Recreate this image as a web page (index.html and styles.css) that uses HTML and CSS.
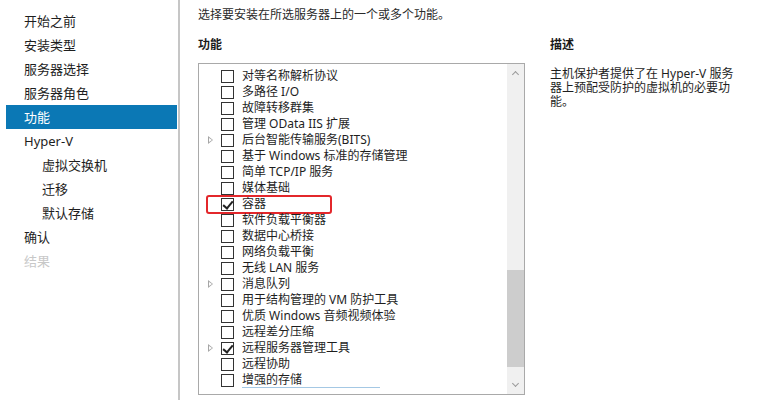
FILE: index.html
```html
<!DOCTYPE html>
<html lang="zh-CN">
<head>
    <meta charset="UTF-8">
    <title>添加角色和功能向导</title>
    <link rel="stylesheet" href="styles.css">
</head>
<body>
    <div class="wizard">
        <ul class="nav">
            <li>开始之前</li>
            <li>安装类型</li>
            <li>服务器选择</li>
            <li>服务器角色</li>
            <li class="active">功能</li>
            <li>Hyper-V</li>
            <li class="sub">虚拟交换机</li>
            <li class="sub">迁移</li>
            <li class="sub">默认存储</li>
            <li>确认</li>
            <li class="disabled">结果</li>
        </ul>
        <div class="main">
            <p class="intro">选择要安装在所选服务器上的一个或多个功能。</p>
            <div class="columns">
                <div class="features">
                    <h3>功能</h3>
                    <div class="listbox">
                        <ul class="tree">
                            <li><span class="exp"></span><span class="cb"></span>对等名称解析协议</li>
                            <li><span class="exp"></span><span class="cb"></span>多路径 I/O</li>
                            <li><span class="exp"></span><span class="cb"></span>故障转移群集</li>
                            <li><span class="exp"></span><span class="cb"></span>管理 OData IIS 扩展</li>
                            <li><span class="exp more"></span><span class="cb"></span>后台智能传输服务(BITS)</li>
                            <li><span class="exp"></span><span class="cb"></span>基于 Windows 标准的存储管理</li>
                            <li><span class="exp"></span><span class="cb"></span>简单 TCP/IP 服务</li>
                            <li><span class="exp"></span><span class="cb"></span>媒体基础</li>
                            <li class="marked"><span class="exp"></span><span class="cb checked"></span>容器</li>
                            <li><span class="exp"></span><span class="cb"></span>软件负载平衡器</li>
                            <li><span class="exp"></span><span class="cb"></span>数据中心桥接</li>
                            <li><span class="exp"></span><span class="cb"></span>网络负载平衡</li>
                            <li><span class="exp"></span><span class="cb"></span>无线 LAN 服务</li>
                            <li><span class="exp more"></span><span class="cb"></span>消息队列</li>
                            <li><span class="exp"></span><span class="cb"></span>用于结构管理的 VM 防护工具</li>
                            <li><span class="exp"></span><span class="cb"></span>优质 Windows 音频视频体验</li>
                            <li><span class="exp"></span><span class="cb"></span>远程差分压缩</li>
                            <li><span class="exp more"></span><span class="cb checked"></span>远程服务器管理工具</li>
                            <li><span class="exp"></span><span class="cb"></span>远程协助</li>
                            <li><span class="exp"></span><span class="cb"></span><span class="focus">增强的存储</span></li>
                        </ul>
                        <div class="scrollbar">
                            <span class="arrow up"></span>
                            <div class="track"><div class="thumb"></div></div>
                            <span class="arrow down"></span>
                        </div>
                    </div>
                </div>
                <div class="desc">
                    <h3>描述</h3>
                    <p>主机保护者提供了在 Hyper-V 服务器上预配受防护的虚拟机的必要功能。</p>
                </div>
            </div>
        </div>
    </div>
</body>
</html>
```

FILE: styles.css
```css
body {
    margin: 0;
    background: #fff;
    font-family: "Noto Sans", "Noto Sans CJK SC", sans-serif;
    color: #1e1e1e;
}
ul {
    list-style: none;
    margin: 0;
    padding: 0;
}
.wizard {
    display: flex;
    height: 400px;
}
.nav {
    width: 180px;
    padding-top: 9px;
    border-right: 2px solid #c6c6c6;
    font-size: 13px;
    box-sizing: border-box;
}
.nav li {
    height: 24px;
    line-height: 24px;
    margin-left: 6px;
    width: 171px;
    padding-left: 18px;
    box-sizing: border-box;
}
.nav li.sub {
    padding-left: 36px;
}
.nav li.active {
    background: #0b78b5;
    color: #fff;
}
.nav li.disabled {
    color: #c8c8c8;
}
.main {
    padding-left: 18px;
    flex: 1;
}
.intro {
    margin: 7px 0 0;
    font-size: 12px;
    line-height: 16px;
    color: #2a2a2a;
}
.columns {
    display: flex;
}
.features {
    width: 327px;
}
h3 {
    margin: 14px 0 0;
    font-size: 12px;
    line-height: 16px;
    font-weight: bold;
    color: #1a1a1a;
}
.listbox {
    margin-top: 10px;
    height: 332px;
    border: 1px solid #a9a9a9;
    box-sizing: border-box;
    display: flex;
    overflow: hidden;
}
.tree {
    flex: 1;
    padding-top: 4px;
    font-size: 12px;
}
.tree li {
    position: relative;
    height: 16px;
    line-height: 16px;
    display: flex;
    align-items: center;
    white-space: nowrap;
}
.exp {
    width: 22px;
    height: 16px;
    flex: none;
    position: relative;
}
.exp.more::before {
    content: "";
    position: absolute;
    left: 9px;
    top: 4px;
    border-left: 5px solid #a6a6a6;
    border-top: 4px solid transparent;
    border-bottom: 4px solid transparent;
}
.exp.more::after {
    content: "";
    position: absolute;
    left: 10px;
    top: 6px;
    border-left: 3px solid #fff;
    border-top: 2px solid transparent;
    border-bottom: 2px solid transparent;
}
.cb {
    width: 13px;
    height: 13px;
    border: 1px solid #333;
    box-sizing: border-box;
    margin-right: 8px;
    flex: none;
    background: #fff;
    position: relative;
}
.cb.checked::after {
    content: "";
    position: absolute;
    left: 3px;
    top: 0px;
    width: 4px;
    height: 8px;
    border-right: 2px solid #222;
    border-bottom: 2px solid #222;
    transform: rotate(40deg);
}
.marked::before {
    content: "";
    position: absolute;
    left: 7px;
    top: -1px;
    width: 126px;
    height: 19px;
    border: 2px solid #e3272b;
    border-radius: 3px;
    box-sizing: border-box;
}
.focus {
    display: inline-block;
    width: 138px;
    border-bottom: 1px solid #a4c8e4;
    line-height: 15px;
}
.scrollbar {
    width: 17px;
    background: #f0f0f0;
    display: flex;
    flex-direction: column;
}
.arrow {
    height: 17px;
    position: relative;
}
.arrow::after {
    content: "";
    position: absolute;
    left: 6px;
    width: 4px;
    height: 4px;
    border-left: 1px solid #9a9a9a;
    border-top: 1px solid #9a9a9a;
}
.arrow.up::after {
    top: 8px;
    transform: rotate(45deg);
}
.arrow.down::after {
    top: 4px;
    transform: rotate(225deg);
}
.track {
    flex: 1;
    position: relative;
}
.thumb {
    position: absolute;
    left: 0;
    right: 0;
    top: 189px;
    height: 97px;
    background: #cdcdcd;
}
.desc {
    padding-left: 25px;
    width: 195px;
}
.desc p {
    margin: 14px 0 0;
    font-size: 12px;
    line-height: 14px;
    color: #1e1e1e;
}
```
